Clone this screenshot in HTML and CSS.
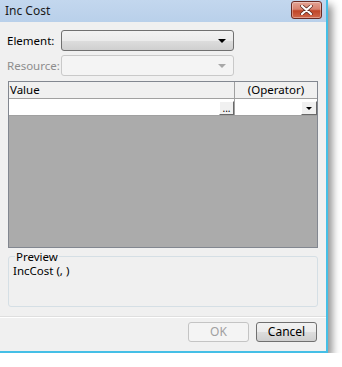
FILE: index.html
```html
<!DOCTYPE html>
<html lang="en">
<head>
    <meta charset="UTF-8" />
    <title>Inc Cost</title>
    <link rel="stylesheet" href="styles.css">
</head>
<body>
    <div class="window">
        <div class="titlebar">
            <span class="title">Inc Cost</span>
            <button class="close-btn" aria-label="Close">
                <svg width="13" height="10" viewBox="0 0 13 10">
                    <path d="M2 1 L11 9 M11 1 L2 9" stroke="#5a2a22" stroke-width="3.6" stroke-linecap="round" />
                    <path d="M2 1 L11 9 M11 1 L2 9" stroke="#ffffff" stroke-width="2.2" stroke-linecap="round" />
                </svg>
            </button>
        </div>
        <div class="content">
            <div class="field-row">
                <label class="field-label">Element:</label>
                <div class="combo">
                    <span class="combo-arrow"></span>
                </div>
            </div>
            <div class="field-row">
                <label class="field-label disabled">Resource:</label>
                <div class="combo disabled">
                    <span class="combo-arrow"></span>
                </div>
            </div>

            <div class="grid">
                <div class="grid-head">
                    <div class="col-value">Value</div>
                    <div class="col-op">(Operator)</div>
                </div>
                <div class="grid-row">
                    <div class="col-value cell">
                        <span class="ellipsis-btn">...</span>
                    </div>
                    <div class="col-op cell">
                        <span class="drop-btn"><span class="small-arrow"></span></span>
                    </div>
                </div>
                <div class="grid-empty"></div>
            </div>

            <fieldset class="preview">
                <legend>Preview</legend>
                <div class="preview-text">IncCost (, )</div>
            </fieldset>
        </div>
        <div class="footer">
            <button class="btn disabled">OK</button>
            <button class="btn">Cancel</button>
        </div>
    </div>
</body>
</html>
```

FILE: styles.css
```css
body {
    margin: 0;
    background-color: white;
    font-family: "Noto Sans", "Open Sans", sans-serif;
    font-size: 11.5px;
    color: #000;
}
.window {
    width: 326px;
    height: 351px;
    background-color: #f0f0f0;
    border-right: 2px solid #45bfe6;
    border-bottom: 2px solid #45bfe6;
    box-shadow: 4px 5px 8px rgba(0, 0, 0, 0.45);
    display: flex;
    flex-direction: column;
}
.titlebar {
    height: 22px;
    flex-shrink: 0;
    background: linear-gradient(#c3d7ee, #b9d0ea);
    display: flex;
    align-items: center;
    justify-content: space-between;
    padding: 0 4px 0 5px;
    box-sizing: border-box;
}
.title {
    font-size: 12px;
    color: #1a1a1a;
    margin-top: -1px;
}
.close-btn {
    width: 31px;
    height: 18px;
    margin-top: -2px;
    padding: 0;
    border: 1px solid #6b2a23;
    border-radius: 3px;
    background: linear-gradient(#e3a394 0%, #d8826f 45%, #c04528 55%, #d0684c 100%);
    display: flex;
    align-items: center;
    justify-content: center;
    box-shadow: inset 0 0 0 1px rgba(255, 255, 255, 0.35);
}
.content {
    flex: 1;
    padding: 8px 9px 0 8px;
    display: flex;
    flex-direction: column;
    min-height: 0;
}
.field-row {
    display: flex;
    align-items: center;
    height: 21px;
    margin-bottom: 4px;
    flex-shrink: 0;
}
.field-label {
    width: 54px;
    flex-shrink: 0;
    margin-left: -1px;
    white-space: nowrap;
}
.field-label.disabled {
    color: #8d8d8d;
}
.combo {
    width: 171px;
    height: 19px;
    border: 1px solid #707070;
    border-radius: 3px;
    background: linear-gradient(#f2f2f2 0%, #ebebeb 50%, #dddddd 51%, #cfcfcf 100%);
    position: relative;
}
.combo.disabled {
    border-color: #c9c9c9;
    background: #f4f4f4;
}
.combo-arrow {
    position: absolute;
    right: 7px;
    top: 8px;
    border-left: 4px solid transparent;
    border-right: 4px solid transparent;
    border-top: 4px solid #000;
}
.combo.disabled .combo-arrow {
    border-top-color: #a8a8a8;
}
.grid {
    margin-top: 1px;
    width: 310px;
    height: 167px;
    flex-shrink: 0;
    border: 1px solid #828790;
    box-sizing: border-box;
    display: flex;
    flex-direction: column;
}
.grid-head {
    display: flex;
    height: 16px;
    background: #f0f0f0;
    border-bottom: 1px solid #a0a0a0;
    line-height: 15px;
}
.col-value {
    width: 224px;
    border-right: 1px solid #a0a0a0;
    padding-left: 1px;
}
.col-op {
    flex: 1;
    text-align: center;
}
.grid-row {
    display: flex;
    height: 16px;
    background: white;
    border-bottom: 1px solid #a0a0a0;
}
.cell {
    display: flex;
    justify-content: flex-end;
    align-items: flex-end;
}
.ellipsis-btn {
    width: 15px;
    height: 14px;
    background: #f0f0f0;
    border: 1px solid;
    border-color: #fff #696969 #696969 #fff;
    box-sizing: border-box;
    display: flex;
    align-items: flex-end;
    justify-content: center;
    font-size: 10px;
    line-height: 10px;
    padding-bottom: 1px;
}
.drop-btn {
    width: 16px;
    height: 14px;
    background: #f0f0f0;
    border: 1px solid;
    border-color: #fff #696969 #696969 #fff;
    box-sizing: border-box;
    display: flex;
    align-items: center;
    justify-content: center;
}
.small-arrow {
    border-left: 3px solid transparent;
    border-right: 3px solid transparent;
    border-top: 3px solid #000;
    margin-top: 1px;
}
.grid-empty {
    flex: 1;
    background: #ababab;
}
.preview {
    margin: 2px 0 0 0;
    width: 310px;
    height: 57px;
    flex-shrink: 0;
    box-sizing: border-box;
    border: 1px solid #d5dfe5;
    border-radius: 3px;
    padding: 0 0 0 4px;
}
.preview legend {
    padding: 0 1px;
    margin-left: 2px;
    line-height: 13px;
}
.preview-text {
    margin-top: 1px;
    line-height: 14px;
}
.footer {
    border-top: 1px solid #dfdfdf;
    box-shadow: inset 0 1px 0 #ffffff;
    height: 35px;
    flex-shrink: 0;
    box-sizing: border-box;
    display: flex;
    justify-content: flex-end;
    align-items: flex-start;
    gap: 7px;
    padding: 5px 9px 0 0;
}
.btn {
    width: 61px;
    height: 20px;
    border: 1px solid #707070;
    border-radius: 3px;
    background: linear-gradient(#f2f2f2 0%, #ebebeb 50%, #dddddd 51%, #cfcfcf 100%);
    font-family: "Noto Sans", "Open Sans", sans-serif;
    font-size: 12px;
    padding: 0;
    line-height: 16px;
}
.btn.disabled {
    color: #a0a0a0;
    border-color: #c4c4c4;
    background: #f4f4f4;
}
```
